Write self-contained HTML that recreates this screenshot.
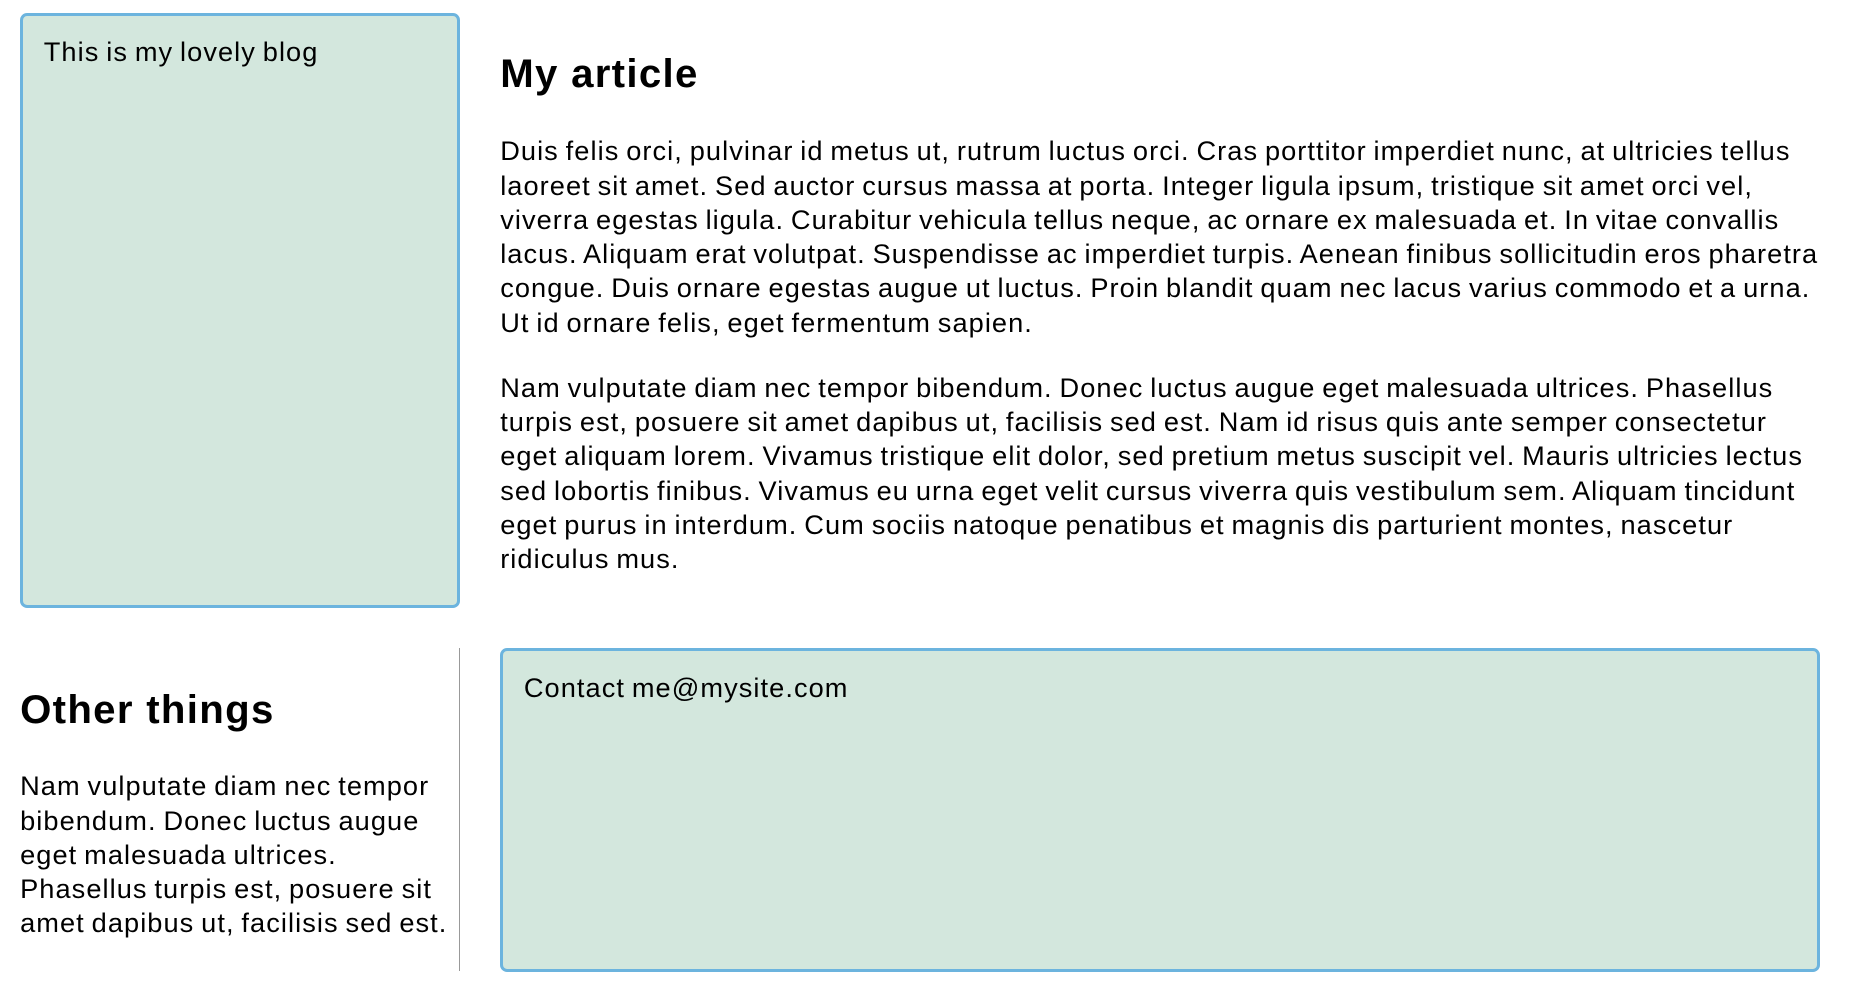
<!DOCTYPE html>
<html><head><meta charset="utf-8"><style>
html,body{margin:0;padding:0;background:#fff;}
body{width:1560px;height:845px;zoom:1.1825;position:relative;font-family:"Liberation Sans",Arial,sans-serif;color:#000;overflow:hidden;}
.box{position:absolute;background:#d3e7dd;border:3px solid #6cb4de;border-radius:6px;box-sizing:border-box;}
.t{position:absolute;font-size:23px;line-height:29px;margin:0;letter-spacing:0.9px;word-spacing:-1.5px;white-space:nowrap;}
h1,h2{position:absolute;margin:0;font-size:34px;line-height:40px;font-weight:bold;letter-spacing:1.1px;}
.vl{position:absolute;left:388px;top:548px;width:1px;height:273px;background:#999;}
</style></head><body>
<div class="box" style="left:17px;top:11px;width:372px;height:503px;"></div>
<div class="t" style="left:37px;top:29.5px;">This is my lovely blog</div>
<h1 style="left:423px;top:42px;">My article</h1>
<p class="t" style="left:423px;top:113.5px;">Duis felis orci, pulvinar id metus ut, rutrum luctus orci. Cras porttitor imperdiet nunc, at ultricies tellus<br>laoreet sit amet. Sed auctor cursus massa at porta. Integer ligula ipsum, tristique sit amet orci vel,<br>viverra egestas ligula. Curabitur vehicula tellus neque, ac ornare ex malesuada et. In vitae convallis<br>lacus. Aliquam erat volutpat. Suspendisse ac imperdiet turpis. Aenean finibus sollicitudin eros pharetra<br>congue. Duis ornare egestas augue ut luctus. Proin blandit quam nec lacus varius commodo et a urna.<br>Ut id ornare felis, eget fermentum sapien.</p>
<p class="t" style="left:423px;top:313.5px;">Nam vulputate diam nec tempor bibendum. Donec luctus augue eget malesuada ultrices. Phasellus<br>turpis est, posuere sit amet dapibus ut, facilisis sed est. Nam id risus quis ante semper consectetur<br>eget aliquam lorem. Vivamus tristique elit dolor, sed pretium metus suscipit vel. Mauris ultricies lectus<br>sed lobortis finibus. Vivamus eu urna eget velit cursus viverra quis vestibulum sem. Aliquam tincidunt<br>eget purus in interdum. Cum sociis natoque penatibus et magnis dis parturient montes, nascetur<br>ridiculus mus.</p>
<div class="vl"></div>
<h2 style="left:17px;top:580px;">Other things</h2>
<p class="t" style="left:17px;top:650.5px;">Nam vulputate diam nec tempor<br>bibendum. Donec luctus augue<br>eget malesuada ultrices.<br>Phasellus turpis est, posuere sit<br>amet dapibus ut, facilisis sed est.</p>
<div class="box" style="left:423px;top:548px;width:1116px;height:274px;"></div>
<div class="t" style="left:443px;top:567.5px;">Contact me@mysite.com</div>
</body></html>
